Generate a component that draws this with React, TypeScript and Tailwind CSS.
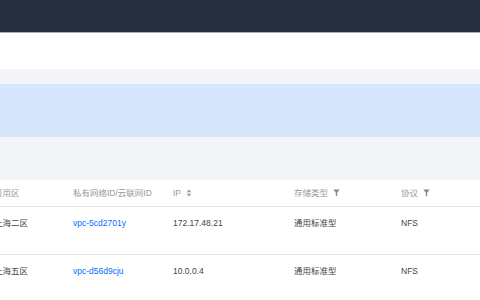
import React from "react";

const font = { fontFamily: "'Liberation Sans', 'Noto Sans CJK SC', sans-serif" };

function SortIcon() {
  return (
    <svg width="6" height="8" viewBox="0 0 6 8" className="ml-[5px]">
      <path d="M3 0.5 L5.5 3.3 H0.5 Z" fill="#9a9a9a" />
      <path d="M3 7.5 L5.5 4.7 H0.5 Z" fill="#9a9a9a" />
    </svg>
  );
}

function FilterIcon() {
  return (
    <svg width="7" height="8" viewBox="0 0 7 8" className="ml-[5px]">
      <path d="M0.3 0.5 H6.7 L4.2 3.8 V7.5 L2.8 6.8 V3.8 Z" fill="#8a8a8a" />
    </svg>
  );
}

const rows = [
  { zone: "上海二区", vpc: "vpc-5cd2701y", ip: "172.17.48.21", type: "通用标准型", proto: "NFS" },
  { zone: "上海五区", vpc: "vpc-d56d9cju", ip: "10.0.0.4", type: "通用标准型", proto: "NFS" },
];

export default function App() {
  return (
    <div className="w-[480px] h-[300px] overflow-hidden bg-white text-[8.5px]" style={font}>
      <div className="h-[32px] bg-[#262f3e]" />
      <div className="h-[1px] bg-[#a8acb6]" />
      <div className="h-[36px] bg-white" />
      <div className="h-[15px] bg-[#f2f4f8]" />
      <div className="h-[53px] bg-[#d5e6fd]" />
      <div className="h-[43px] bg-[#f2f4f8]" />
      <div className="bg-white">
        <div className="ml-[-6px] grid grid-cols-[79px_100px_121px_107px_1fr] h-[27px] items-center text-[#999] border-b border-[#e6e6e6]">
          <div>可用区</div>
          <div>私有网络ID/云联网ID</div>
          <div className="flex items-center">IP<SortIcon /></div>
          <div className="flex items-center">存储类型<FilterIcon /></div>
          <div className="flex items-center">协议<FilterIcon /></div>
        </div>
        {rows.map((r) => (
          <div
            key={r.vpc}
            className="ml-[-6px] grid grid-cols-[79px_100px_121px_107px_1fr] h-[48px] pt-[10px] leading-[12px] text-[#444] border-b border-[#e6e6e6]"
          >
            <div>{r.zone}</div>
            <div className="text-[#006eff]">{r.vpc}</div>
            <div>{r.ip}</div>
            <div>{r.type}</div>
            <div>{r.proto}</div>
          </div>
        ))}
      </div>
    </div>
  );
}
